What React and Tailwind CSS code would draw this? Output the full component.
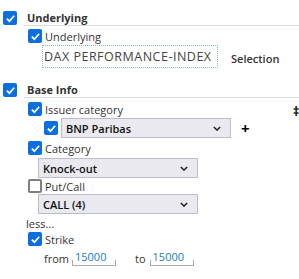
import React from 'react';

function Check({ checked = true }) {
  if (!checked) {
    return <span className="block w-[14px] h-[14px] rounded-[2px] border-2 border-[#808080] bg-white flex-shrink-0" />;
  }
  return (
    <span className="flex w-[14px] h-[14px] rounded-[2px] bg-[#0b6fe0] items-center justify-center flex-shrink-0">
      <svg viewBox="0 0 12 12" className="w-[11px] h-[11px]">
        <path d="M2 6.2 L4.8 9 L10 3" fill="none" stroke="white" strokeWidth="2" />
      </svg>
    </span>
  );
}

function Select({ value, width, className = '' }) {
  return (
    <div className={`flex items-center justify-between h-[20px] bg-[#e9e9ef] border border-[#b9bccb] pl-[4px] pr-[9px] ${width} ${className}`}>
      <span className="text-[11px] font-semibold text-[#111] leading-none">{value}</span>
      <svg viewBox="0 0 10 6" className="w-[8px] h-[5px]">
        <path d="M1 1 L5 5 L9 1" fill="none" stroke="#222" strokeWidth="1.8" />
      </svg>
    </div>
  );
}

function Row({ checked = true, label, className = '' }) {
  return (
    <div className={`flex items-center gap-[3px] h-[14px] ${className}`}>
      <Check checked={checked} />
      <span className="text-[11px] leading-none text-[#333]">{label}</span>
    </div>
  );
}

function Heading({ children, className = '' }) {
  return (
    <div className={`flex items-center h-[16px] ${className}`}>
      <div className="w-[24px] pl-[3px]"><Check /></div>
      <div className="flex-1 h-[16px] border-b border-[#dcdcdc] pl-[3px] text-[11px] leading-[15px] font-bold text-[#333]">{children}</div>
    </div>
  );
}

function NumInput({ value }) {
  return (
    <div className="flex items-end h-[16px]">
      <span className="w-px h-[6px] bg-[#a8a8a8]" />
      <span className="w-[42px] h-[16px] border-b border-[#a8a8a8] pl-[2px] text-[11px] leading-[14px] text-[#1b7bc4]">{value}</span>
      <span className="w-px h-[6px] bg-[#a8a8a8]" />
    </div>
  );
}

export default function App() {
  return (
    <div className="w-[299px] h-[279px] overflow-hidden bg-white text-[#333] relative pt-[10px]" style={{ fontFamily: '"Open Sans", sans-serif' }}>
      {/* Underlying */}
      <Heading>Underlying</Heading>
      <div className="pl-[28px]">
        <Row label="Underlying" className="mt-[3px]" />
        <div className="flex items-center mt-[2px] ml-[14px]">
          <div className="w-[176px] h-[23px] border border-dotted border-[#8db3e6] pl-[1px] text-[12.5px] tracking-[0.5px] leading-[21px] text-[#444]">DAX PERFORMANCE-INDEX</div>
          <span className="ml-[13px] mt-[5px] text-[11px] font-semibold text-[#333]">Selection</span>
        </div>
      </div>

      {/* Base Info */}
      <Heading className="mt-[14px]">Base Info</Heading>
      <div className="pl-[28px]">
        <Row label="Issuer category" className="mt-[4px]" />
        <div className="flex items-center mt-[2px] ml-[16px]">
          <Check />
          <Select value="BNP Paribas" width="w-[170px]" className="ml-[3px]" />
          <span className="ml-[10px] text-[15px] font-bold text-black leading-none">+</span>
        </div>
        <Row label="Category" className="mt-[3px]" />
        <Select value="Knock-out" width="w-[160px]" className="mt-[3px] ml-[10px]" />
        <Row checked={false} label="Put/Call" className="mt-[1px]" />
        <Select value="CALL (4)" width="w-[160px]" className="mt-[1px] ml-[10px]" />
      </div>
      <div className="pl-[26px] mt-[3px] h-[14px] text-[11px] leading-[14px] text-[#333]">less...</div>
      <div className="pl-[28px]">
        <Row label="Strike" className="mt-[1px]" />
        <div className="flex items-end mt-[4px] ml-[16px] text-[11px] leading-[14px] text-[#333]">
          <span className="mr-[3px]">from</span>
          <NumInput value="15000" />
          <span className="ml-[19px] mr-[4px]">to</span>
          <NumInput value="15000" />
        </div>
      </div>

      <span className="absolute left-[293px] top-[106px] text-[12px] font-bold text-black leading-none">‡</span>
    </div>
  );
}
